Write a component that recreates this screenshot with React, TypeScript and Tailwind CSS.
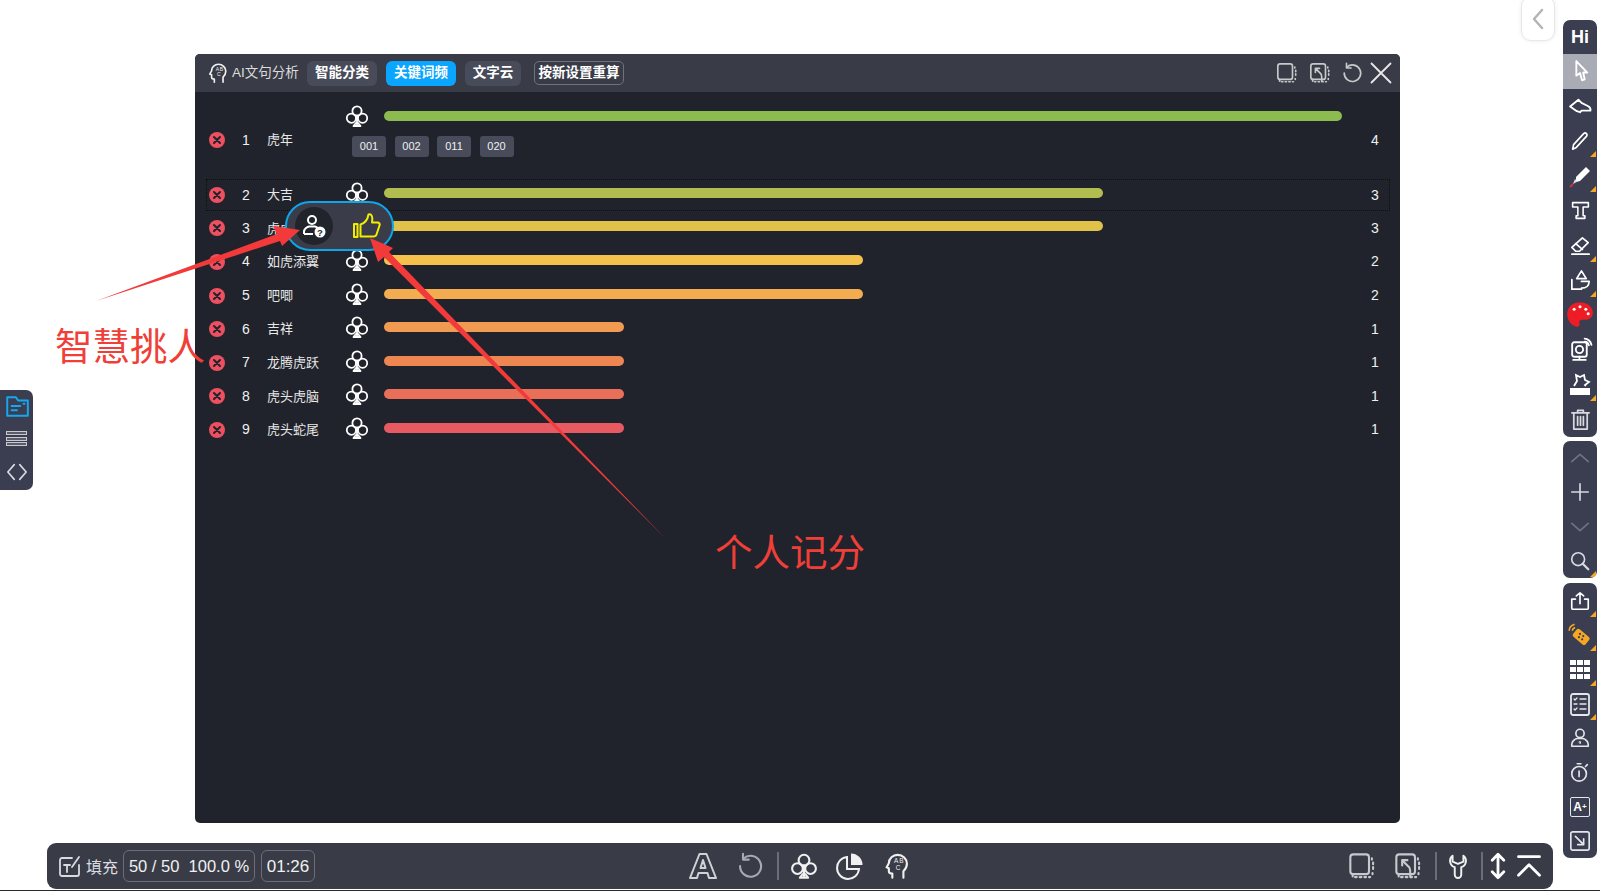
import type { ReactNode } from "react";

const FONT = { cjk: "font-['Liberation_Sans','Noto_Sans_CJK_SC',sans-serif]" };

const rows = [
  { label: "大吉", count: 3, width: "w-[719px]", color: "bg-[#b2bd4f]" },
  { label: "虎虎生威", count: 3, width: "w-[719px]", color: "bg-[#e0c24a]" },
  { label: "如虎添翼", count: 2, width: "w-[479px]", color: "bg-[#f6c04c]" },
  { label: "吧唧", count: 2, width: "w-[479px]", color: "bg-[#f3ac50]" },
  { label: "吉祥", count: 1, width: "w-[240px]", color: "bg-[#f19a52]" },
  { label: "龙腾虎跃", count: 1, width: "w-[240px]", color: "bg-[#ee8652]" },
  { label: "虎头虎脑", count: 1, width: "w-[240px]", color: "bg-[#e96f58]" },
  { label: "虎头蛇尾", count: 1, width: "w-[240px]", color: "bg-[#e85a62]" },
];

type IconProps = { size?: number; className?: string; children: ReactNode };

const Svg = ({ size = 24, className = "text-white", children }: IconProps) => (
  <svg
    width={size}
    height={size}
    viewBox="0 0 24 24"
    fill="none"
    stroke="currentColor"
    strokeWidth={1.8}
    strokeLinecap="round"
    strokeLinejoin="round"
    className={`shrink-0 ${className}`}
  >
    {children}
  </svg>
);

const Club = ({ size = 24, className }: { size?: number; className?: string }) => (
  <Svg size={size} className={className}>
    <circle cx="12" cy="7" r="4.6" />
    <circle cx="6.4" cy="14.2" r="4.6" />
    <circle cx="17.6" cy="14.2" r="4.6" />
    <path d="M12 11.5v9M8.5 22h7l-2.4-3h-2.2z" />
  </Svg>
);

const Remove = () => (
  <span className="flex h-[16px] w-[16px] items-center justify-center rounded-full bg-[#ec5061]">
    <svg width="10" height="10" viewBox="0 0 10 10" stroke="#22242c" strokeWidth="2" strokeLinecap="round">
      <path d="M2 2l6 6M8 2l-6 6" />
    </svg>
  </span>
);

const Head = ({ size = 24, className }: { size?: number; className?: string }) => (
  <Svg size={size} className={className}>
    <path d="M8 22v-3.500c-1 0-3 0-3-2v-2.500l-2-.8 2-3.500C5 5.500 8.500 2.500 12.500 2.500c4.500 0 8 3.500 8 7.500 0 3.500-1.500 5-3 6.500V22" />
    <text x="9.500" y="9.500" fontSize="5.500" fill="currentColor" stroke="none" fontFamily="Liberation Sans">A</text>
    <text x="14" y="9.500" fontSize="5.500" fill="currentColor" stroke="none" fontFamily="Liberation Sans">B</text>
    <text x="11" y="15.500" fontSize="5.500" fill="currentColor" stroke="none" fontFamily="Liberation Sans">C</text>
  </Svg>
);

const Undo = ({ size = 24, className }: { size?: number; className?: string }) => (
  <Svg size={size} className={className}>
    <path d="M6.500 5.500A9 9 0 1 1 3.500 12" />
    <path d="M6 1.500v5h5" />
  </Svg>
);

const Screen = ({ size = 24, className, back }: { size?: number; className?: string; back?: boolean }) => (
  <Svg size={size} className={className}>
    <rect x="2" y="2" width="16" height="17" rx="2.500" />
    <path d="M20.500 5.500v1M21.500 9v1.500M21.500 13v1.500M21 18v1M18 21.500h1M14 21.500h1.500M10 21.500h1.500M6 21.500h1.500" />
    <path d="M4 19v2" />
    {back && <path d="M7 7h4.500M7 7v4.500M7 7l6 6c1 1 1 3 1 8" />}
  </Svg>
);

const Corner = () => (
  <span className="absolute right-[1px] bottom-[1px] h-0 w-0 border-b-[6px] border-l-[6px] border-b-[#f5a623] border-l-transparent" />
);

const Tool = ({ children, corner, active, tall }: { children: ReactNode; corner?: boolean; active?: boolean; tall?: boolean }) => (
  <div className={`relative flex items-center justify-center ${tall ? "h-[34.800px]" : "h-[34.400px]"} ${active ? "bg-[#a9acb4]" : ""}`}>
    {children}
    {corner && <Corner />}
  </div>
);

const ToolGroup = ({ children, className = "" }: { children: ReactNode; className?: string }) => (
  <div className={`flex w-[34px] flex-col overflow-hidden rounded-[7px] bg-[#3a3e50] ${className}`}>{children}</div>
);

const RightToolbar = () => (
  <div className="flex w-[47px] flex-col pl-[10px] pt-[20px]">
    <ToolGroup>
      <div className="flex h-[34px] items-center justify-center font-['Liberation_Sans',sans-serif] text-[18px] font-bold text-white">
        Hi
      </div>
      <Tool tall active>
        <Svg size={25}>
          <path d="M8 2v14l3.500-2.500 2 7 2.500-1-1.500-6.500h4z" />
        </Svg>
      </Tool>
      <Tool tall>
        <Svg size={25}>
          <path d="M2 12l8-6.500 3 3 6 3c2 1 3 2.500 2.500 4.500H13l-1.500 1.500-3-1z" />
        </Svg>
      </Tool>
      <Tool tall corner>
        <Svg size={22}>
          <path d="M4 21l1-5L16 4c2-2 5 1 3 3L8 19z" />
        </Svg>
      </Tool>
      <Tool tall corner>
        <svg width="24" height="24" viewBox="0 0 24 24">
          <path d="M8 13L18 3l4 4-10 10-4 1z" fill="#fff" />
          <path d="M7 15l2.500 2.500L5 20z" fill="#e0e0e0" />
          <path d="M2 23l3-3" stroke="#c33" strokeWidth="2" />
        </svg>
      </Tool>
      <Tool tall>
        <Svg size={21}>
          <path d="M3 3h18v5h-6v10h2v3H7v-3h2V8H3z" />
        </Svg>
      </Tool>
      <Tool tall corner>
        <Svg size={23}>
          <path d="M3 14L14 4l6 5-9 9H7z" />
          <path d="M7 10l7 6M3 21h18" />
        </Svg>
      </Tool>
      <Tool tall corner>
        <Svg size={23}>
          <path d="M13 2l5 8H8z" />
          <path d="M3 11v10h10" />
          <path d="M13 13h8c0 4-3 7-8 7" />
        </Svg>
      </Tool>
      <Tool tall>
        <svg width="28" height="28" viewBox="0 0 24 24">
          <path d="M12 1C5 1 1 6 1 11c0 5 3 10 8 11 2 .3 3-1 2.500-3-.5-2.500 1-3 3-3 4 .5 8.500-1 8.500-6 0-5-5-9-11.500-9z" fill="#ee1c25" />
          <circle cx="7" cy="7" r="1.300" fill="#fff" />
          <circle cx="12" cy="5" r="1.300" fill="#fff" />
          <circle cx="17" cy="7" r="1.300" fill="#fff" />
          <circle cx="19" cy="11" r="1.300" fill="#fff" />
        </svg>
      </Tool>
      <Tool tall>
        <Svg size={25}>
          <rect x="4" y="5" width="14" height="14" rx="2" />
          <circle cx="11" cy="12" r="3.500" />
          <path d="M11 19v3M5 22h12M16 1.500c3 0 6 3 6.500 6M16 4.500c2 0 3.500 1.500 4 3.500" />
        </Svg>
      </Tool>
      <Tool tall corner>
        <svg width="24" height="24" viewBox="0 0 24 24">
          <path d="M2 15h20v7H2z" fill="#fff" />
          <path d="M6 13l3-5-1-6 4 2 4-2 1 5 4 2-4 3 1 1" fill="none" stroke="#fff" strokeWidth="1.800" />
        </svg>
      </Tool>
      <Tool tall>
        <Svg size={23} className="text-[#d8dae0]">
          <path d="M3 5h18M9 5V2.500h6V5M5 5v17h14V5M9 9v9M12 9v9M15 9v9" />
        </Svg>
      </Tool>
    </ToolGroup>
    <ToolGroup className="mt-[4px]">
      <Tool>
        <Svg size={22} className="text-[#6e7280]">
          <path d="M3 16l9-8 9 8" />
        </Svg>
      </Tool>
      <Tool>
        <Svg size={22} className="text-[#d8dae0]">
          <path d="M12 3v18M3 12h18" />
        </Svg>
      </Tool>
      <Tool>
        <Svg size={22} className="text-[#6e7280]">
          <path d="M3 8l9 8 9-8" />
        </Svg>
      </Tool>
      <Tool corner>
        <Svg size={22} className="text-[#d8dae0]">
          <circle cx="10" cy="10" r="7" />
          <path d="M15 15l6 6" strokeWidth="2.500" />
        </Svg>
      </Tool>
    </ToolGroup>
    <ToolGroup className="mt-[5px]">
      <Tool corner>
        <Svg size={22}>
          <path d="M12 15V3M8 6.500L12 3l4 3.500M7 10H3v10a1 1 0 0 0 1 1h16a1 1 0 0 0 1-1V10h-4" />
        </Svg>
      </Tool>
      <Tool corner>
        <svg width="26" height="26" viewBox="0 0 24 24">
          <rect x="6" y="9" width="15" height="9" rx="2" transform="rotate(40 13 13)" fill="#f5a623" />
          <circle cx="12" cy="11" r="1" fill="#3a3e50" />
          <circle cx="15" cy="13" r="1" fill="#3a3e50" />
          <circle cx="11" cy="14" r="1" fill="#3a3e50" />
          <circle cx="14" cy="16" r="1" fill="#3a3e50" />
          <path d="M2 8c0-3 2-5 5-6M5 8c0-1.500 1-2.500 2.500-3" fill="none" stroke="#f5a623" strokeWidth="1.500" />
        </svg>
      </Tool>
      <Tool corner>
        <div className="grid grid-cols-3 gap-[1.500px]">
          {Array.from({ length: 9 }).map((_, i) => (
            <span key={i} className="h-[5.500px] w-[5.500px] bg-white" />
          ))}
        </div>
      </Tool>
      <Tool corner>
        <Svg size={24} className="text-[#e4e6ea]">
          <rect x="3" y="2" width="18" height="21" rx="2" />
          <path d="M6 7l1 1 2-2M12 7h6M6 12h3M12 12h6M6 17l1 1 2-2M12 17h6" strokeWidth="1.300" />
        </Svg>
      </Tool>
      <Tool>
        <Svg size={22} className="text-[#e4e6ea]">
          <circle cx="12" cy="7" r="4.500" />
          <path d="M3 21v-2c0-3 3-6 6-6.500h6c3 .5 6 3.500 6 6.500v2z" />
          <path d="M11 16.500c1-1 2.500 0 1 1.500" strokeWidth="1.200" />
        </Svg>
      </Tool>
      <Tool>
        <Svg size={22} className="text-[#e4e6ea]">
          <circle cx="11" cy="14" r="8" />
          <path d="M11 11v6M9 3h4M18 6l2-2" />
        </Svg>
      </Tool>
      <Tool>
        <div className="relative flex h-[20px] w-[20px] items-center justify-center rounded-[2px] border-[1.500px] border-[#e4e6ea] font-['Liberation_Sans',sans-serif] text-[12px] font-bold leading-none text-white">
          A<span className="text-[8px] leading-none">+</span>
        </div>
      </Tool>
      <Tool>
        <Svg size={22} className="text-[#e4e6ea]">
          <rect x="2" y="2" width="20" height="20" rx="2" />
          <path d="M7 7l9 9M16 9.500V16H9.500" />
        </Svg>
      </Tool>
    </ToolGroup>
  </div>
);

const LeftToolbar = () => (
  <div className="w-[47px] pt-[390px]">
    <div className="flex h-[100px] w-[33px] flex-col items-center rounded-r-[7px] bg-[#3a3e50]">
      <div className="flex h-[32px] items-center">
        <Svg size={26} className="text-[#14a8f0]">
          <path d="M3 21V4h8l2 3h9v14z" />
          <path d="M7 12h8M7 16h5M18 10h1" />
        </Svg>
      </div>
      <div className="flex h-[33px] flex-col justify-center gap-[1.500px]">
        <span className="h-[4px] w-[21px] border border-[#c8cad0] bg-[#5a5e6c]" />
        <span className="h-[4px] w-[21px] border border-[#c8cad0] bg-[#5a5e6c]" />
        <span className="h-[4px] w-[21px] border border-[#c8cad0] bg-[#5a5e6c]" />
      </div>
      <div className="flex h-[33px] items-center">
        <Svg size={22} className="text-[#d8dae0]">
          <path d="M9 4l-7 8 7 8M15 4l7 8-7 8" />
        </Svg>
      </div>
    </div>
  </div>
);

const Tab = ({ children, active, width }: { children: ReactNode; active?: boolean; width: string }) => (
  <div
    className={`flex h-[25px] items-center justify-center rounded-[6px] text-[13.500px] font-bold text-white ${width} ${
      active ? "bg-[#0aa5ff]" : "bg-[#474b5a]"
    }`}
  >
    {children}
  </div>
);

const Header = () => (
  <div className={`flex h-[38px] items-center bg-[#393c47] ${FONT.cjk}`}>
    <Head size={22} className="ml-[12px] text-[#f0f0f0]" />
    <span className="ml-[3px] w-[69px] whitespace-nowrap text-[13.500px] text-[#dcdcdc]">AI文句分析</span>
    <div className="ml-[6px] flex items-center gap-[9px]">
      <Tab width="w-[70px]">智能分类</Tab>
      <Tab active width="w-[70px]">关键词频</Tab>
      <Tab width="w-[56px]">文字云</Tab>
      <div className="ml-[4px] flex h-[24px] w-[90px] items-center justify-center rounded-[5px] border border-[#6f727c] text-[13.500px] font-bold text-white">
        按新设置重算
      </div>
    </div>
    <div className="ml-auto mr-[8px] flex items-center">
      <Screen size={22} className="text-[#c8c9cd]" />
      <Screen size={22} back className="ml-[11px] text-[#c8c9cd]" />
      <Undo size={22} className="ml-[10px] text-[#c8c9cd]" />
      <svg width="22" height="22" viewBox="0 0 22 22" stroke="#e8e8e8" strokeWidth="1.800" className="ml-[7px]">
        <path d="M1 1l20 20M21 1L1 21" />
      </svg>
    </div>
  </div>
);

const RowCells = ({ index, label, offset }: { index: number; label: string; offset: string }) => (
  <>
    <div className={`flex w-[20px] justify-center ${offset}`}>
      <Remove />
    </div>
    <span className={`w-[38px] text-center text-[14px] text-[#f0f0f0] ${offset}`}>{index}</span>
    <span className={`w-[80px] pl-[2px] text-[13px] text-[#e8e8e8] ${offset}`}>{label}</span>
  </>
);

const Count = ({ value, offset }: { value: number; offset: string }) => (
  <span className={`ml-[27px] w-[12px] text-center text-[14px] text-[#f0f0f0] ${offset}`}>{value}</span>
);

const Board = () => (
  <div className={`flex-1 pl-[12px] pr-[11px] pt-[11px] ${FONT.cjk}`}>
    <div className="flex h-[73px] items-center">
      <RowCells index={1} label="虎年" offset="mt-[1px]" />
      <div className="w-[997px] self-start">
        <div className="flex h-[26px] items-center">
          <Club size={24} />
          <span className="ml-[15px] h-[10px] w-[958px] rounded-full bg-[#8cbb50]" />
        </div>
        <div className="mt-[6.500px] flex gap-[8.500px] pl-[7px]">
          {["001", "002", "011", "020"].map((chip) => (
            <span
              key={chip}
              className="flex h-[21px] w-[34px] items-center justify-center rounded-[3px] bg-[#474b5a] text-[11px] text-[#f0f0f0]"
            >
              {chip}
            </span>
          ))}
        </div>
      </div>
      <Count value={4} offset="mt-[1px]" />
    </div>
    {rows.map((row, i) => (
      <div
        key={i}
        className={
          i === 0
            ? "mt-[3.600px] flex h-[30px] items-center pb-[3px] outline-1 outline-dotted outline-[#0d0e12]"
            : "flex h-[33.600px] items-center"
        }
      >
        <RowCells index={i + 2} label={row.label} offset="mt-[4px]" />
        <Club size={24} />
        <div className="ml-[15px] w-[958px]">
          <div className={`h-[10px] rounded-full ${row.width} ${row.color}`} />
        </div>
        <Count value={row.count} offset="mt-[4px]" />
      </div>
    ))}
  </div>
);

const PickPopup = () => (
  <div className="absolute left-[90px] top-[147px] flex h-[50px] w-[109px] items-center rounded-full border-2 border-[#0ea5e9] bg-[#3a3d49] pl-[8px]">
    <div className="flex h-[38px] w-[38px] items-center justify-center rounded-full bg-[#22242c]">
      <svg width="24" height="24" viewBox="0 0 24 24" fill="none" stroke="#fff" strokeWidth="2">
        <circle cx="10" cy="6" r="4" />
        <path d="M2 20v-2c0-3 3-5 5-5.500h6c1 .3 2 .8 3 1.500M2 20h9" />
        <circle cx="18" cy="18" r="5.500" fill="#fff" stroke="none" />
        <text x="18" y="21.500" textAnchor="middle" fontSize="9.500" fontWeight="bold" fill="#22242c" stroke="none" fontFamily="Liberation Sans">
          ?
        </text>
      </svg>
    </div>
    <svg width="28" height="26" viewBox="0 0 28 26" fill="none" stroke="#f2ee00" strokeWidth="2" strokeLinejoin="round" className="ml-[20px]">
      <rect x="1" y="11" width="3.500" height="13" />
      <path d="M7.500 11.500c3-1 7-4 8-10 3-1 4.500 2 3.500 8h5.500c2 0 2.500 1.500 2 3l-3 9c-.5 1.500-1.500 2-3 2H7.500z" />
    </svg>
  </div>
);

const Panel = () => (
  <div className="relative ml-[148px] mt-[54px] flex h-[769px] w-[1205px] flex-col overflow-hidden rounded-[5px] bg-[#20232b]">
    <Header />
    <Board />
    <PickPopup />
  </div>
);

const Divider = ({ className = "" }: { className?: string }) => (
  <span className={`h-[28px] w-[1.500px] shrink-0 bg-[#6b6e78] ${className}`} />
);

const BottomBar = () => (
  <div className="mt-[20px] flex h-[46px] items-center rounded-[9px] bg-[#393c47] pl-[11px]">
    <Svg size={24} className="text-[#d8dae0]">
      <path d="M21 11v9a2 2 0 0 1-2 2H4a2 2 0 0 1-2-2V6a2 2 0 0 1 2-2h10" />
      <path d="M14 13l7-10M6 11h6M9 11v7" />
    </Svg>
    <span className="ml-[4px] w-[32px] shrink-0 whitespace-nowrap font-['Noto_Sans_CJK_SC',sans-serif] text-[16px] text-[#dcdde0]">填充</span>
    <div className="ml-[5px] flex h-[32px] w-[132px] shrink-0 items-center justify-center whitespace-pre rounded-[6px] border border-[#6b6e78] pt-[1px] font-['Liberation_Sans',sans-serif] text-[16.500px] text-[#f0f0f0]">
      50 / 50{"  "}100.0 %
    </div>
    <div className="ml-[6px] flex h-[32px] w-[54px] shrink-0 items-center justify-center rounded-[6px] border border-[#6b6e78] pt-[1px] font-['Liberation_Sans',sans-serif] text-[17px] text-[#f0f0f0]">
      01:26
    </div>
    <svg width="30" height="30" viewBox="0 0 30 30" fill="none" stroke="#d0d2d6" strokeWidth="2" strokeLinejoin="round" className="ml-[373px] shrink-0">
      <path d="M2 27L11.500 3h7L28 27h-7l-1.500-5h-9L9 27z" />
      <path d="M12.500 17h5L15 9z" />
    </svg>
    <Undo size={28} className="ml-[18px] text-[#a8aab0]" />
    <Divider className="ml-[13px]" />
    <Club size={28} className="ml-[11.500px] text-[#f0f0f0]" />
    <svg width="28" height="28" viewBox="0 0 28 28" fill="none" stroke="#f0f0f0" strokeWidth="2" className="ml-[18px] shrink-0">
      <path d="M11 5a11 11 0 1 0 12 12H11z" />
      <path d="M15 1.500a11.500 11.500 0 0 1 11.500 11.500H15z" fill="#f0f0f0" stroke="none" />
    </svg>
    <Head size={28} className="ml-[19px] text-[#f0f0f0]" />
    <Screen size={28} className="ml-[437px] text-[#c8c9cd]" />
    <Screen size={28} back className="ml-[18px] text-[#c8c9cd]" />
    <Divider className="ml-[13px]" />
    <Svg size={26} className="ml-[8.500px] text-[#f0f0f0]">
      <path d="M7 2.500A6 6 0 0 0 9 13v7a3 3 0 0 0 6 0v-7a6 6 0 0 0 2-10.500V8l-5 2-5-2z" />
    </Svg>
    <Divider className="ml-[10px]" />
    <Svg size={28} className="ml-[1.500px] text-white">
      <path d="M12 2v20M7 7l5-5 5 5M7 17l5 5 5-5" strokeWidth="2.400" />
    </Svg>
    <Svg size={28} className="ml-[3px] text-white">
      <path d="M3 4h18M3 20l9-9 9 9" strokeWidth="2.400" />
    </Svg>
  </div>
);

const Annotations = () => (
  <>
    <svg width="1600" height="891" viewBox="0 0 1600 891" className="pointer-events-none absolute left-0 top-0">
      <path d="M96 301L277 234 273 226 300 230 282 246 280 241Z" fill="#f23a3a" />
      <path d="M665 538L384 257 378 262 370 238 393 248 389 252Z" fill="#f23a3a" />
    </svg>
    <span className="absolute left-[55px] top-[319px] whitespace-nowrap font-['Noto_Sans_CJK_SC',sans-serif] text-[37.500px] leading-[50px] text-[#ef3f38]">
      智慧挑人
    </span>
    <span className="absolute left-[715px] top-[525px] whitespace-nowrap font-['Noto_Sans_CJK_SC',sans-serif] text-[37.500px] leading-[50px] text-[#ef3f38]">
      个人记分
    </span>
  </>
);

const App = () => (
  <div className="relative flex h-[891px] w-[1600px] overflow-hidden bg-white">
    <LeftToolbar />
    <div className="w-[1506px]">
      <Panel />
      <BottomBar />
    </div>
    <RightToolbar />
    <div className="absolute left-[1521px] top-[-4px] flex h-[45px] w-[34px] items-center justify-center rounded-[10px] border border-[#e8e8e8] bg-white shadow-[0_0_4px_rgba(0,0,0,0.08)]">
      <svg width="14" height="24" viewBox="0 0 14 24" fill="none" stroke="#b4b4b4" strokeWidth="2.500" strokeLinecap="round" strokeLinejoin="round">
        <path d="M11 3L3 12l8 9" />
      </svg>
    </div>
    <Annotations />
    <div className="absolute bottom-0 left-0 h-[1px] w-full bg-[#2a2a2a]" />
  </div>
);

export default App;
